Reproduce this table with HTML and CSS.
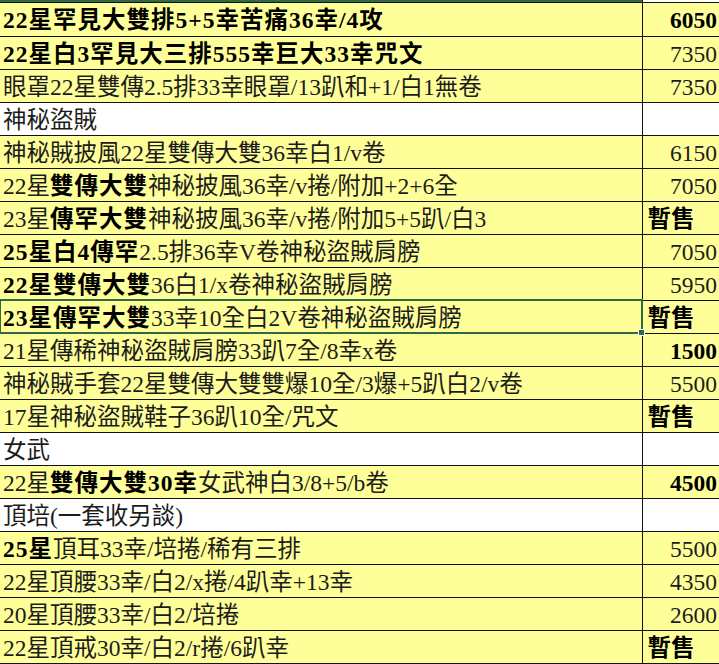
FILE: index.html
```html
<!DOCTYPE html>
<html lang="zh-Hant">
<head>
<meta charset="utf-8">
<title>價目表</title>
<link rel="stylesheet" href="styles.css">
</head>
<body>
<div class="topbar"><div class="top-left"></div><div class="top-right"></div></div>
<table class="sheet">
  <colgroup><col class="c-item"><col class="c-price"></colgroup>
  <tbody>
    <tr><td class="item"><b>22星罕見大雙排5+5幸苦痛36幸/4攻</b></td><td class="price"><b>6050</b></td></tr>
    <tr><td class="item"><b>22星白3罕見大三排555幸巨大33幸咒文</b></td><td class="price">7350</td></tr>
    <tr><td class="item">眼罩22星雙傳2.5排33幸眼罩/13趴和+1/白1無卷</td><td class="price">7350</td></tr>
    <tr class="section"><td class="item">神秘盜賊</td><td class="price"></td></tr>
    <tr><td class="item">神秘賊披風22星雙傳大雙36幸白1/v卷</td><td class="price">6150</td></tr>
    <tr><td class="item">22星<b>雙傳大雙</b>神秘披風36幸/v捲/附加+2+6全</td><td class="price">7050</td></tr>
    <tr><td class="item">23星<b>傳罕大雙</b>神秘披風36幸/v捲/附加5+5趴/白3</td><td class="price hold"><b>暫售</b></td></tr>
    <tr><td class="item"><b>25星白4傳罕</b>2.5排36幸V卷神秘盜賊肩膀</td><td class="price">7050</td></tr>
    <tr><td class="item"><b>22星雙傳大雙</b>36白1/x卷神秘盜賊肩膀</td><td class="price">5950</td></tr>
    <tr><td class="item selected"><b>23星傳罕大雙</b>33幸10全白2V卷神秘盜賊肩膀</td><td class="price hold"><b>暫售</b></td></tr>
    <tr><td class="item">21星傳稀神秘盜賊肩膀33趴7全/8幸x卷</td><td class="price"><b>1500</b></td></tr>
    <tr><td class="item">神秘賊手套22星雙傳大雙雙爆10全/3爆+5趴白2/v卷</td><td class="price">5500</td></tr>
    <tr><td class="item">17星神秘盜賊鞋子36趴10全/咒文</td><td class="price hold"><b>暫售</b></td></tr>
    <tr class="section"><td class="item">女武</td><td class="price"></td></tr>
    <tr><td class="item">22星<b>雙傳大雙30幸</b>女武神白3/8+5/b卷</td><td class="price"><b>4500</b></td></tr>
    <tr class="section"><td class="item">頂培(一套收另談)</td><td class="price"></td></tr>
    <tr><td class="item"><b>25星</b>頂耳33幸/培捲/稀有三排</td><td class="price">5500</td></tr>
    <tr><td class="item">22星頂腰33幸/白2/x捲/4趴幸+13幸</td><td class="price">4350</td></tr>
    <tr><td class="item">20星頂腰33幸/白2/培捲</td><td class="price">2600</td></tr>
    <tr><td class="item">22星頂戒30幸/白2/r捲/6趴幸</td><td class="price hold"><b>暫售</b></td></tr>
  </tbody>
</table>
</body>
</html>
```

FILE: styles.css
```css
html, body {
  margin: 0;
  padding: 0;
  background: #ffffff;
}

body {
  width: 719px;
  height: 664px;
  overflow: hidden;
  font-family: "Liberation Serif", "Noto Sans CJK TC", serif;
  color: #1c1c1c;
}

.topbar {
  display: flex;
  height: 3px;
}

.top-left {
  width: 642px;
  border-top: 2px solid #2f6a45;
  border-bottom: 1px solid #111;
  box-sizing: border-box;
}

.top-right {
  flex: 1;
  border-bottom: 1px solid #111;
  border-left: 1px solid #111;
  box-sizing: border-box;
}

.sheet {
  width: 719px;
  border-collapse: collapse;
  table-layout: fixed;
}

.c-item { width: 642px; }
.c-price { width: 77px; }

.sheet td {
  height: 33px;
  padding: 2px 3px 0;
  box-sizing: border-box;
  background: #ffff99;
  border-bottom: 1px solid #111;
  font-size: 23.5px;
  line-height: 28px;
  white-space: nowrap;
  overflow: hidden;
  vertical-align: middle;
}

.sheet td.item {
  border-right: 1px solid #111;
  padding-left: 3px;
}

.sheet td.price {
  text-align: right;
  padding-right: 2px;
}

.sheet td.price.hold {
  text-align: left;
  padding-left: 5px;
}

.sheet tr.section td {
  background: #ffffff;
}

.sheet b {
  font-weight: 700;
  color: #000;
}

.sheet td.item b {
  letter-spacing: 1px;
}

.sheet td.selected {
  position: relative;
  overflow: visible;
  outline: 2px solid #2f6a45;
  outline-offset: -1px;
}

.sheet td.selected::after {
  content: "";
  position: absolute;
  right: -3px;
  bottom: -3px;
  width: 5px;
  height: 5px;
  background: #2f6a45;
  border: 1px solid #ffffff;
}
```
